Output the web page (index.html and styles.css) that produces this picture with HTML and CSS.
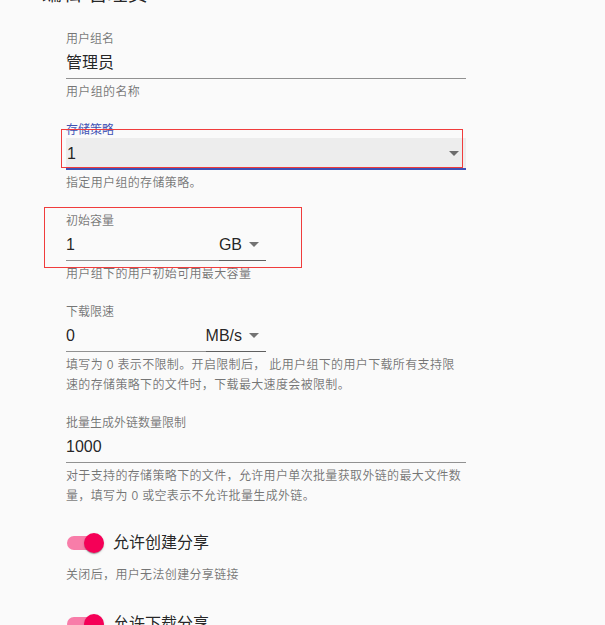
FILE: index.html
```html
<!DOCTYPE html>
<html lang="zh-CN">
<head>
<meta charset="utf-8">
<title>编辑 管理员</title>
<link rel="stylesheet" href="styles.css">
</head>
<body>
<div class="page">
  <div class="title">编辑 管理员</div>
  <div class="form">
    <div class="field">
      <div class="label">用户组名</div>
      <div class="control">
        <div class="input-part full"><span class="value">管理员</span></div>
      </div>
      <div class="helper">用户组的名称</div>
    </div>

    <div class="field">
      <div class="label focused">存储策略</div>
      <div class="control">
        <div class="select-part full focused-select">
          <span class="value grow">1</span>
          <svg class="arrow" viewBox="0 0 24 24" width="24" height="24"><path d="M7 10l5 5 5-5z"/></svg>
        </div>
      </div>
      <div class="helper">指定用户组的存储策略。</div>
      <div class="mark mark-policy"></div>
    </div>

    <div class="field">
      <div class="label">初始容量</div>
      <div class="control split">
        <div class="input-part"><span class="value">1</span></div>
        <div class="select-part">
          <span class="value">GB</span>
          <svg class="arrow" viewBox="0 0 24 24" width="24" height="24"><path d="M7 10l5 5 5-5z"/></svg>
        </div>
      </div>
      <div class="helper">用户组下的用户初始可用最大容量</div>
      <div class="mark mark-capacity"></div>
    </div>

    <div class="field">
      <div class="label">下载限速</div>
      <div class="control split">
        <div class="input-part"><span class="value">0</span></div>
        <div class="select-part">
          <span class="value">MB/s</span>
          <svg class="arrow" viewBox="0 0 24 24" width="24" height="24"><path d="M7 10l5 5 5-5z"/></svg>
        </div>
      </div>
      <div class="helper">填写为 0 表示不限制。开启限制后， 此用户组下的用户下载所有支持限速的存储策略下的文件时，下载最大速度会被限制。</div>
    </div>

    <div class="field">
      <div class="label">批量生成外链数量限制</div>
      <div class="control">
        <div class="input-part full"><span class="value">1000</span></div>
      </div>
      <div class="helper">对于支持的存储策略下的文件，允许用户单次批量获取外链的最大文件数量，填写为 0 或空表示不允许批量生成外链。</div>
    </div>

    <div class="switch-field first">
      <div class="switch-row">
        <span class="switch"><span class="track"></span><span class="thumb"></span></span>
        <span class="switch-label">允许创建分享</span>
      </div>
      <div class="helper">关闭后，用户无法创建分享链接</div>
    </div>

    <div class="switch-field">
      <div class="switch-row">
        <span class="switch"><span class="track"></span><span class="thumb"></span></span>
        <span class="switch-label">允许下载分享</span>
      </div>
      <div class="helper">关闭后，用户无法下载分享的文件</div>
    </div>
  </div>
</div>
</body>
</html>
```

FILE: styles.css
```css
html, body {
  margin: 0;
  padding: 0;
  background: #fafafa;
  overflow: hidden;
}

body {
  font-family: "Liberation Sans", "Noto Sans CJK SC", sans-serif;
  color: rgba(0, 0, 0, 0.87);
}

.page {
  padding-left: 42px;
  margin-top: -22px;
}

.title {
  font-size: 20px;
  line-height: 32px;
  height: 32px;
  margin-bottom: 21px;
}

.form {
  padding-left: 24px;
  width: 400px;
}

.field {
  position: relative;
  width: 400px;
  margin-bottom: 20px;
}

.label {
  font-size: 12px;
  line-height: 12px;
  height: 16px;
  padding-top: 1.5px;
  box-sizing: border-box;
  color: rgba(0, 0, 0, 0.54);
}

.label.focused {
  color: #3f51b5;
}

.control {
  display: flex;
  height: 32px;
  font-size: 16px;
}

.control.split {
  width: 200px;
}

.input-part,
.select-part {
  display: flex;
  align-items: flex-start;
  box-sizing: border-box;
  padding-top: 6px;
  height: 32px;
  border-bottom: 1px solid rgba(0, 0, 0, 0.42);
}

.input-part {
  flex: 1;
}

.full {
  flex: 1;
}

.select-part {
  border-bottom-color: rgba(0, 0, 0, 0.62);
}

.focused-select {
  background: rgba(0, 0, 0, 0.05);
  border-bottom: 2px solid #3f51b5;
  padding-left: 1px;
}

.value {
  line-height: 19px;
  white-space: nowrap;
}

.grow {
  flex: 1;
}

.arrow {
  fill: rgba(0, 0, 0, 0.54);
  margin-top: -3px;
  flex: none;
}

.helper {
  margin-top: 3px;
  font-size: 12px;
  line-height: 20px;
  letter-spacing: 0.35px;
  color: rgba(0, 0, 0, 0.54);
}

.mark {
  position: absolute;
  border: 1px solid #f03c3c;
  box-sizing: border-box;
  pointer-events: none;
}

.mark-policy {
  left: -5px;
  top: 7px;
  width: 402px;
  height: 39px;
}

.mark-capacity {
  left: -22px;
  top: -6px;
  width: 258px;
  height: 61px;
}

.switch-field {
  margin-bottom: 20px;
}

.switch-field.first {
  margin-top: -2px;
}

.switch-row {
  display: flex;
  align-items: center;
  margin-left: -11px;
}

.switch {
  position: relative;
  width: 58px;
  height: 38px;
  padding: 12px;
  box-sizing: border-box;
  flex: none;
}

.track {
  display: block;
  width: 34px;
  height: 14px;
  border-radius: 7px;
  background: #f50057;
  opacity: 0.5;
}

.thumb {
  position: absolute;
  left: 29px;
  top: 9px;
  width: 20px;
  height: 20px;
  border-radius: 50%;
  background: #f50057;
  box-shadow: 0 2px 1px -1px rgba(0, 0, 0, 0.2), 0 1px 1px 0 rgba(0, 0, 0, 0.14), 0 1px 3px 0 rgba(0, 0, 0, 0.12);
}

.switch-label {
  font-size: 16px;
  line-height: 24px;
}
```
